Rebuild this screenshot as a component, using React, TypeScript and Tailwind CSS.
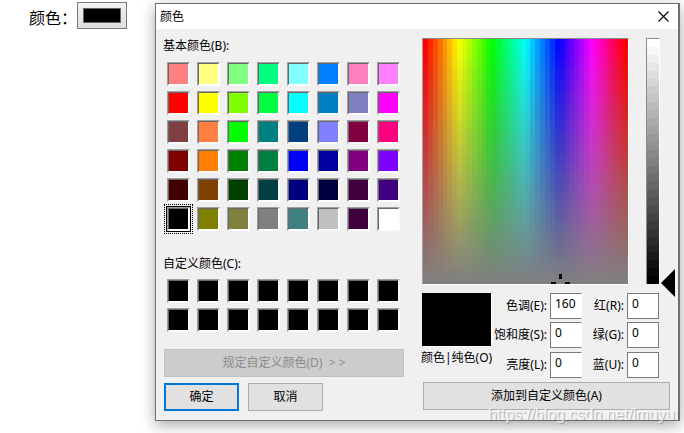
import React from 'react';

const basicColors = [
  '#ff8080', '#ffff80', '#80ff80', '#00ff80', '#80ffff', '#0080ff', '#ff80c0', '#ff80ff',
  '#ff0000', '#ffff00', '#80ff00', '#00ff40', '#00ffff', '#0080c0', '#8080c0', '#ff00ff',
  '#804040', '#ff8040', '#00ff00', '#008080', '#004080', '#8080ff', '#800040', '#ff0080',
  '#800000', '#ff8000', '#008000', '#008040', '#0000ff', '#0000a0', '#800080', '#8000ff',
  '#400000', '#804000', '#004000', '#004040', '#000080', '#000040', '#400040', '#400080',
  '#000000', '#808000', '#808040', '#808080', '#408080', '#c0c0c0', '#400040', '#ffffff',
];

const COLS = 42;
const ROWS = 42;

// Spectrum blocks, hue across and saturation down at fixed luminance
const spectrum: { x: number; y: number; fill: string }[] = [];
for (let r = 0; r < ROWS; r++) {
  for (let c = 0; c < COLS; c++) {
    const hue = (c / (COLS - 1)) * 360;
    const sat = 100 - (r / (ROWS - 1)) * 100;
    spectrum.push({ x: c, y: r, fill: `hsl(${hue} ${sat}% 50%)` });
  }
}

const LUM_STEPS = 31;

const Swatch: React.FC<{ color: string; selected?: boolean }> = ({ color, selected }) => (
  <div className="relative w-[23px] h-[24px]">
    {selected && (
      <div className="absolute -left-[3px] -top-[3px] w-[29px] h-[30px] border border-dotted border-black" />
    )}
    <div
      className={`w-[23px] h-[24px] border border-t-[#a0a0a0] border-l-[#a0a0a0] border-b-[#fafafa] border-r-[#fafafa] ${selected ? 'outline outline-1 outline-black' : ''}`}
    >
      <div
        className="w-full h-full border border-t-[#696969] border-l-[#696969] border-b-white border-r-white"
        style={{ backgroundColor: color }}
      />
    </div>
  </div>
);

const Field: React.FC<{ label: string; value: string; w: string; open?: boolean; className?: string }> = ({ label, value, w, open, className }) => (
  <div className={`flex items-center h-[26px] ${className ?? ''}`}>
    <span className={`${w} text-right whitespace-nowrap text-[12px] leading-[26px] text-black`}>{label}</span>
    <div className={`ml-[3px] w-[32px] h-[26px] bg-white border border-[#7a7a7a] pl-[4px] text-[12px] leading-[20px] text-black ${open ? 'border-r-white' : ''}`}>
      {value}
    </div>
  </div>
);

const App: React.FC = () => {
  return (
    <div className="relative w-[684px] h-[433px] bg-white overflow-hidden font-['Noto_Sans','Noto_Sans_CJK_SC',sans-serif]">
      {/* Form row behind the dialog */}
      <div className="flex items-start pl-[29px] pt-[2px]">
        <span className="w-[48px] mt-[2px] text-[16px] leading-[28px] text-black whitespace-nowrap">颜色：</span>
        <button className="w-[50px] h-[27px] border border-[#7a7a7a] bg-gradient-to-b from-[#f2f2f2] to-[#dddddd] p-[5px]">
          <div className="w-full h-full bg-black border border-[#666666]" />
        </button>
      </div>

      {/* Colour dialog */}
      <div className="absolute left-[155px] top-[3px] w-[525px] h-[418px] flex flex-col border border-r-2 border-[#6f6f6f] bg-[#f0f0f0] shadow-[0_4px_14px_rgba(0,0,0,0.35)]">
        <div className="flex items-center justify-between h-[25px] bg-white pl-[4px] pr-[9px] shrink-0">
          <span className="text-[12px] leading-[23px] -mt-[1px] text-black">颜色</span>
          <svg width="11" height="11" viewBox="0 0 11 11" className="text-black">
            <path d="M0.5 0.5L10.5 10.5M10.5 0.5L0.5 10.5" stroke="currentColor" strokeWidth="1.1" fill="none" />
          </svg>
        </div>

        <div className="flex flex-1">
          {/* Left column */}
          <div className="w-[266px] pl-[7px] shrink-0 flex flex-col">
            <div className="text-[12px] leading-[16px] text-black mt-[9px] whitespace-nowrap">基本颜色(B):</div>
            <div className="grid grid-cols-[repeat(8,23px)] gap-x-[7px] gap-y-[5px] ml-[4px] mt-[8px]">
              {basicColors.map((color, index) => (
                <Swatch key={index} color={color} selected={index === 40} />
              ))}
            </div>
            <div className="text-[12px] leading-[16px] text-black mt-[25px] whitespace-nowrap">自定义颜色(C):</div>
            <div className="grid grid-cols-[repeat(8,23px)] gap-x-[7px] gap-y-[5px] ml-[4px] mt-[7px]">
              {Array.from({ length: 16 }).map((_, index) => (
                <Swatch key={index} color="#000000" />
              ))}
            </div>
            <div className="ml-[1px] mt-[17px] w-[240px] h-[28px] bg-[#cccccc] border border-[#bfbfbf] text-[12px] leading-[26px] text-[#8a8a8a] text-center whitespace-nowrap">
              规定自定义颜色(D)&nbsp;&nbsp;&gt; &gt;
            </div>
            <div className="flex ml-[1px] mt-[6px] gap-[9px]">
              <div className="w-[75px] h-[28px] bg-[#e1e1e1] border-2 border-[#0078d7] text-[12px] leading-[24px] text-black text-center">确定</div>
              <div className="w-[75px] h-[28px] bg-[#e1e1e1] border border-[#adadad] text-[12px] leading-[26px] text-black text-center">取消</div>
            </div>
          </div>

          {/* Right column */}
          <div className="flex-1 flex flex-col pt-[9px]">
            <div className="flex">
              <div className="relative w-[207px] h-[247px] border-t border-l border-t-[#8a8a8a] border-l-[#a0a0a0] border-r border-b border-r-white border-b-white">
                <svg width="205" height="245" viewBox={`0 0 ${COLS} ${ROWS}`} preserveAspectRatio="none" shapeRendering="crispEdges" className="block">
                  {spectrum.map((cell, i) => (
                    <rect key={i} x={cell.x} y={cell.y} width="1.02" height="1.02" fill={cell.fill} />
                  ))}
                </svg>
                <div className="absolute left-[128px] top-[235px]">
                  <svg width="19" height="10" viewBox="0 0 19 10" shapeRendering="crispEdges" className="block">
                    <rect x="8" y="0" width="3" height="5" fill="#000" />
                    <rect x="0" y="8" width="5" height="2" fill="#000" />
                    <rect x="14" y="8" width="5" height="2" fill="#000" />
                  </svg>
                </div>
              </div>
              <div className="relative ml-[17px] w-[14px] h-[246px] border-t border-l border-r border-t-[#8a8a8a] border-l-[#8a8a8a] border-r-white flex flex-col">
                {Array.from({ length: LUM_STEPS }).map((_, i) => {
                  const v = Math.round(255 - (i / (LUM_STEPS - 1)) * 255);
                  return <div key={i} className="flex-1" style={{ backgroundColor: `rgb(${v},${v},${v})` }} />;
                })}
                <svg width="14" height="28" viewBox="0 0 14 28" className="absolute left-[14px] top-[230px]">
                  <path d="M14 0V28L0 14Z" fill="#000" />
                </svg>
              </div>
            </div>

            <div className="flex mt-[8px]">
              <div className="w-[70px] shrink-0">
                <div className="w-[70px] h-[54px] bg-black border-r border-b border-r-white border-b-white" />
                <div className="text-[12px] leading-[16px] mt-[3px] text-black whitespace-nowrap -ml-[1px]">颜色|纯色(O)</div>
              </div>
              <div className="flex flex-col gap-[3px] -ml-[1px]">
                <Field label="色调(E):" value="160" w="w-[56px]" open />
                <Field label="饱和度(S):" value="0" w="w-[56px]" open />
                <Field label="亮度(L):" value="0" w="w-[56px]" open className="mt-[1px]" />
              </div>
              <div className="flex flex-col gap-[3px]">
                <Field label="红(R):" value="0" w="w-[42px]" />
                <Field label="绿(G):" value="0" w="w-[42px]" />
                <Field label="蓝(U):" value="0" w="w-[42px]" className="mt-[1px]" />
              </div>
            </div>

            <div className="mt-[4px] ml-[1px] w-[247px] h-[28px] bg-[#e1e1e1] border border-[#adadad] text-[12px] leading-[26px] text-black text-center whitespace-nowrap">
              添加到自定义颜色(A)
            </div>
          </div>
        </div>
      </div>

      {/* Site watermark over the shot */}
      <div className="absolute left-[488px] top-[405px] font-['Liberation_Sans',sans-serif] text-[15.7px] leading-[20px] text-white/80 whitespace-nowrap [text-shadow:1px_1px_1px_rgba(110,110,110,0.6)]">
        https://blog.csdn.net/lmuyu
      </div>
    </div>
  );
};

export default App;
